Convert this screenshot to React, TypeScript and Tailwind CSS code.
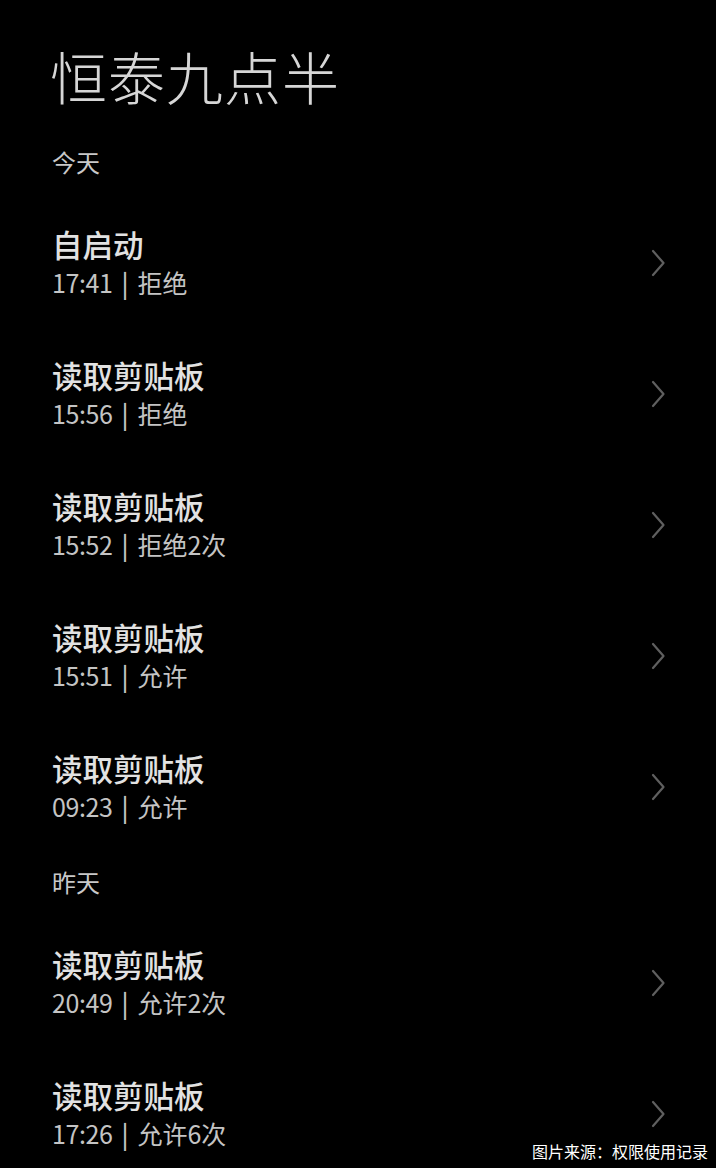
import React from 'react';

type Record_ = { title: string; time: string; result: string };

const SECTIONS: { label: string; items: Record_[] }[] = [
  {
    label: '今天',
    items: [
      { title: '自启动', time: '17:41', result: '拒绝' },
      { title: '读取剪贴板', time: '15:56', result: '拒绝' },
      { title: '读取剪贴板', time: '15:52', result: '拒绝2次' },
      { title: '读取剪贴板', time: '15:51', result: '允许' },
      { title: '读取剪贴板', time: '09:23', result: '允许' },
    ],
  },
  {
    label: '昨天',
    items: [
      { title: '读取剪贴板', time: '20:49', result: '允许2次' },
      { title: '读取剪贴板', time: '17:26', result: '允许6次' },
    ],
  },
];

const Chevron = () => (
  <svg width="16" height="28" viewBox="0 0 16 28" fill="none" className="shrink-0">
    <path d="M3 2 L13.5 14 L3 26" stroke="#5f5f5f" strokeWidth="2.2" strokeLinecap="round" strokeLinejoin="round" />
  </svg>
);

const RecordRow: React.FC<{ item: Record_ }> = ({ item }) => (
  <div className="flex items-center justify-between h-[131px] pl-[52px] pr-[50px]">
    <div className="flex flex-col">
      <span className="text-[30.5px] leading-[38px] font-medium text-[#e2e2e2]">{item.title}</span>
      <span className="text-[25px] leading-[38px] text-[#c4c4c4]">
        <span className="tracking-[-0.4px]">{item.time}</span>
        <span className="mx-[9px] font-medium">|</span>
        {item.result}
      </span>
    </div>
    <Chevron />
  </div>
);

export default function App() {
  return (
    <div
      className="relative h-[1168px] w-full overflow-hidden bg-black"
      style={{ fontFamily: '"Noto Sans CJK SC", "Noto Sans", sans-serif' }}
    >
      <h1 className="pt-[43px] pl-[50px] text-[57px] leading-[64px] font-light text-[#d6d6d6] tracking-[1px]">
        恒泰九点半
      </h1>
      <div className="pt-[39px]">
        {SECTIONS.map((section, i) => (
          <div key={section.label} className={i === 0 ? '' : 'pt-[14px]'}>
            <div className="pl-[52px] h-[32px] text-[24px] leading-[32px] text-[#c8c8c8] mb-[19px]">
              {section.label}
            </div>
            {section.items.map((item, j) => (
              <RecordRow key={j} item={item} />
            ))}
          </div>
        ))}
      </div>
      <div className="absolute right-[8px] bottom-[6px] text-[16px] leading-[22px] text-white">
        图片来源：权限使用记录
      </div>
    </div>
  );
}
